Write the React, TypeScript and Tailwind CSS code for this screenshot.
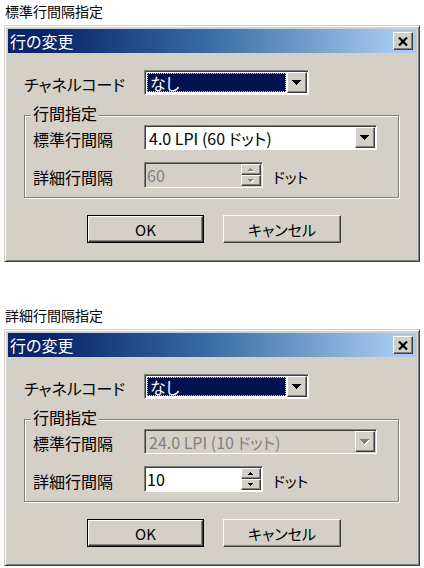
import React from "react";

// classic win2000 bevels
const raised =
  "border border-t-white border-l-white border-r-[#404040] border-b-[#404040] shadow-[inset_-1px_-1px_0_#808080] bg-[#d4d0c8]";
const sunken =
  "border border-t-[#808080] border-l-[#808080] border-r-white border-b-white shadow-[inset_1px_1px_0_#404040] p-[1px]";

const Tri = ({ up = false, w = 7, disabled = false }: { up?: boolean; w?: number; disabled?: boolean }) => {
  const h = Math.ceil(w / 2);
  const mid = Math.floor(w / 2);
  const pts = up
    ? `${mid},0 ${mid + 1},0 ${w},${h} 0,${h}`
    : `0,0 ${w},0 ${mid + 1},${h} ${mid},${h}`;
  return (
    <svg width={w + 1} height={h + 1} viewBox={`0 0 ${w + 1} ${h + 1}`} shapeRendering="crispEdges">
      {disabled && <polygon points={pts} fill="#ffffff" transform="translate(1 1)" />}
      <polygon points={pts} fill={disabled ? "#808080" : "#000000"} />
    </svg>
  );
};

const Combo = ({
  value,
  width,
  selected = false,
  disabled = false,
}: {
  value: string;
  width: string;
  selected?: boolean;
  disabled?: boolean;
}) => (
  <div className={`${sunken} ${width} h-[25px] flex ${disabled ? "bg-[#d4d0c8]" : "bg-white"}`}>
    <div className="flex-1 p-[1px] flex">
      {selected ? (
        <div className="flex-1 bg-[#03124e] border border-dotted border-[#f0d080] text-white pl-[2px] flex items-center leading-none">
          {value}
        </div>
      ) : (
        <div
          className={`flex-1 pl-[2px] flex items-center leading-none ${
            disabled ? "text-[#808080]" : "text-black"
          }`}
        >
          {value}
        </div>
      )}
    </div>
    <div className={`${raised} w-[20px] flex items-center justify-center pt-[1px]`}>
      <Tri w={9} disabled={disabled} />
    </div>
  </div>
);

const SpinEdit = ({ value, disabled = false }: { value: string; disabled?: boolean }) => (
  <div className={`${sunken} w-[119px] h-[26px] flex ${disabled ? "bg-[#d4d0c8]" : "bg-white"}`}>
    <div
      className={`flex-1 pl-[1px] flex items-center leading-none ${disabled ? "text-[#808080]" : "text-black"}`}
    >
      {value}
    </div>
    <div className="w-[20px] flex flex-col">
      <div className={`${raised} flex-1 flex items-center justify-center`}>
        <Tri up w={5} disabled={disabled} />
      </div>
      <div className={`${raised} flex-1 flex items-center justify-center`}>
        <Tri w={5} disabled={disabled} />
      </div>
    </div>
  </div>
);

const Button = ({ label, isDefault = false }: { label: string; isDefault?: boolean }) => (
  <div className={isDefault ? "border border-black" : ""}>
    <div
      className={`${raised} ${isDefault ? "w-[115px] h-[26px]" : "w-[118px] h-[28px]"} flex items-center justify-center text-[15px] leading-none`}
    >
      {label}
    </div>
  </div>
);

const Dialog = ({ mode }: { mode: "standard" | "detail" }) => {
  const isStd = mode === "standard";
  return (
    <div className="ml-[4px] w-[416px] h-[237px] bg-[#d4d0c8] border border-t-[#d4d0c8] border-l-[#d4d0c8] border-r-[#404040] border-b-[#404040] shadow-[inset_1px_1px_0_#fff,inset_-1px_-1px_0_#808080] p-[3px] flex flex-col">
      {/* title bar */}
      <div className="h-[24px] bg-linear-to-r from-[#0a246a] from-10% via-[#3a6ea5] to-[#a6caf0] to-95% flex items-center pl-[2px] pr-[3px]">
        <span className="text-white text-[16px] leading-none flex-1">行の変更</span>
        <div className={`${raised} w-[20px] h-[18px] flex items-center justify-center`}>
          <svg width="10" height="9" viewBox="0 0 10 9">
            <path d="M1 0.5L9 8.5M9 0.5L1 8.5" stroke="#000" strokeWidth="2.2" />
          </svg>
        </div>
      </div>

      <div className="pl-[16px] flex flex-col">
        <div className="mt-[17px] h-[25px] flex items-center">
          <span className="w-[120px] text-[16px] leading-none pt-[3px]">チャネルコード</span>
          <Combo value="なし" width="w-[165px]" selected />
        </div>

        {/* group box */}
        <div className="relative mt-[20px] w-[375px] h-[83px] border border-[#808080] shadow-[inset_1px_1px_0_#fff,1px_1px_0_#fff] pl-[8px] flex flex-col">
          <span className="absolute left-[6px] top-[-12px] px-[2px] bg-[#d4d0c8] text-[16px] leading-[18px]">
            行間指定
          </span>
          <div className="mt-[9px] h-[25px] flex items-center">
            <span className="w-[111px] text-[16px] leading-none pt-[3px]">標準行間隔</span>
            <Combo
              value={isStd ? "4.0 LPI (60 ドット)" : "24.0 LPI (10 ドット)"}
              width="w-[233px]"
              disabled={!isStd}
            />
          </div>
          <div className="mt-[12px] h-[26px] flex items-center">
            <span className="w-[111px] text-[16px] leading-none pt-[3px]">詳細行間隔</span>
            <SpinEdit value={isStd ? "60" : "10"} disabled={isStd} />
            <span className="ml-[10px] text-[15px] leading-none pt-[2px]">ドット</span>
          </div>
        </div>

        <div className="mt-[17px] ml-[63px] flex gap-[19px]">
          <Button label="OK" isDefault />
          <Button label="キャンセル" />
        </div>
      </div>
    </div>
  );
};

const Section = ({ caption, mode }: { caption: string; mode: "standard" | "detail" }) => (
  <div className="flex flex-col">
    <div className="h-[25px] pl-[5px] pt-[2px] text-[14px] leading-[18px]">{caption}</div>
    <Dialog mode={mode} />
  </div>
);

export default function App() {
  return (
    <div className="w-[424px] h-[568px] bg-white text-black overflow-hidden font-['Noto_Sans_CJK_JP','Noto_Sans',sans-serif] [font-feature-settings:'palt']">
      <Section caption="標準行間隔指定" mode="standard" />
      <div className="h-[42px]" />
      <Section caption="詳細行間隔指定" mode="detail" />
    </div>
  );
}
